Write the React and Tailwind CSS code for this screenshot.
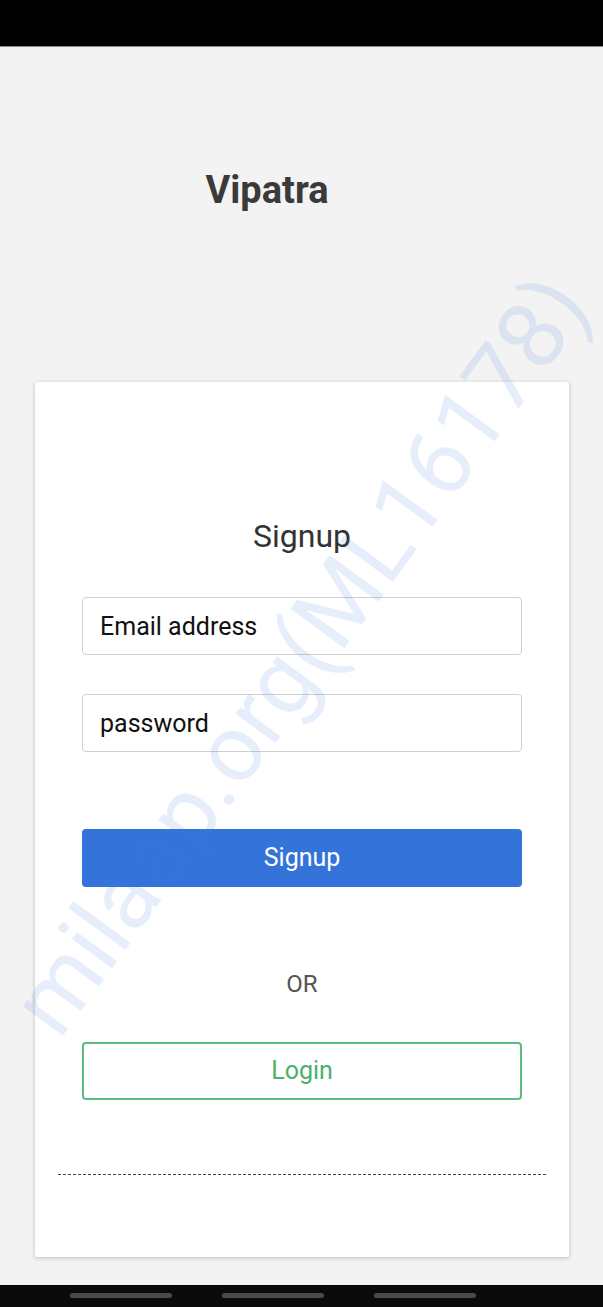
import React from 'react';

function Field({ placeholder, type = 'text' }) {
  return (
    <input
      type={type === 'password' ? 'text' : type}
      placeholder={placeholder}
      className="w-full h-[58px] rounded-[4px] border border-[#cfcfcf] bg-transparent pl-[17px] text-[25px] text-[#111] placeholder:text-[#111] outline-none"
    />
  );
}

export default function App() {
  return (
    <div className="relative w-full h-[1307px] overflow-hidden bg-[#f3f3f3] flex flex-col font-['Roboto','Noto_Sans',sans-serif]">
      {/* status bar */}
      <div className="h-[46px] bg-black" />
      <div className="h-px bg-[#8a8a8a]" />

      {/* brand */}
      <div className="w-[534px] pt-[120px] text-center">
        <h1 className="text-[38px] leading-[46px] font-bold text-[#3a3a3a]">Vipatra</h1>
      </div>

      {/* card */}
      <div className="mt-[169px] ml-[35px] w-[534px] h-[875px] bg-white rounded-[2px] shadow-[0_1px_4px_rgba(0,0,0,0.22)] px-[47px] pt-[134px] flex flex-col">
        <h2 className="text-center text-[32px] leading-[40px] text-[#333]">Signup</h2>

        <div className="mt-[41px]">
          <Field placeholder="Email address" type="email" />
        </div>
        <div className="mt-[39px]">
          <Field placeholder="password" type="password" />
        </div>

        <button className="mt-[77px] h-[58px] w-full rounded-[4px] bg-[#3373da] text-white text-[25px]">
          Signup
        </button>

        <p className="mt-[82px] text-center text-[24px] leading-[30px] text-[#555]">OR</p>

        <button className="mt-[43px] h-[58px] w-full rounded-[4px] border-2 border-[#5cbd7e] text-[#4caf6c] text-[25px]">
          Login
        </button>

        <div className="mt-[74px] -mx-[24px] border-t border-dashed border-[#444]" />
      </div>

      <div className="flex-1" />

      {/* nav bar */}
      <div className="h-[22px] bg-[#0a0a0a] flex items-start pt-[8px] pl-[70px] gap-[50px]">
        <div className="w-[102px] h-[5px] rounded-full bg-[#4a4a4a]" />
        <div className="w-[102px] h-[5px] rounded-full bg-[#4a4a4a]" />
        <div className="w-[102px] h-[5px] rounded-full bg-[#4a4a4a]" />
      </div>

      {/* watermark */}
      <div className="pointer-events-none absolute left-[300px] top-[655px] -translate-x-1/2 -translate-y-1/2 -rotate-[54deg] whitespace-nowrap text-[94px] leading-none text-[rgba(70,120,225,0.13)]">
        milaap.org(ML16178)
      </div>
    </div>
  );
}
